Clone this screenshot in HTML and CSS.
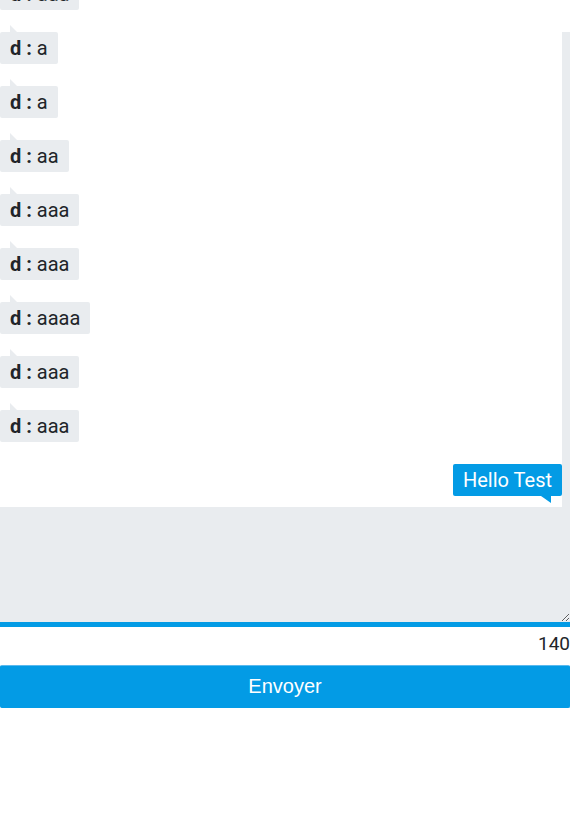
FILE: index.html
```html
<!DOCTYPE html>
<html lang="fr">
<head>
<meta charset="utf-8">
<title>Chat</title>
<link rel="stylesheet" href="styles.css">
</head>
<body>
<div class="page">
  <div class="msg msg-first"><span class="bubble them"><b>d :</b> aaa</span></div>
  <div class="messages">
    <div class="msg"><span class="bubble them"><b>d :</b> a</span></div>
    <div class="msg"><span class="bubble them"><b>d :</b> a</span></div>
    <div class="msg"><span class="bubble them"><b>d :</b> aa</span></div>
    <div class="msg"><span class="bubble them"><b>d :</b> aaa</span></div>
    <div class="msg"><span class="bubble them"><b>d :</b> aaa</span></div>
    <div class="msg"><span class="bubble them"><b>d :</b> aaaa</span></div>
    <div class="msg"><span class="bubble them"><b>d :</b> aaa</span></div>
    <div class="msg"><span class="bubble them"><b>d :</b> aaa</span></div>
    <div class="msg msg-me"><span class="bubble me">Hello Test</span></div>
  </div>
  <textarea class="input"></textarea>
  <div class="counter">140</div>
  <button class="send" type="button">Envoyer</button>
</div>
</body>
</html>
```

FILE: styles.css
```css
html, body {
  margin: 0;
  padding: 0;
  background: #ffffff;
}
body {
  font-family: Roboto, "Liberation Sans", sans-serif;
  color: #212529;
  overflow: hidden;
}
.page {
  width: 570px;
}
.msg {
  display: flex;
}
.msg-first {
  margin-top: -22px;
}
.messages {
  margin-top: 22px;
  border-right: 8px solid #e9ecef;
  display: flex;
  flex-direction: column;
  gap: 22px;
  padding-bottom: 11px;
}
.msg-me {
  justify-content: flex-end;
}
.bubble {
  position: relative;
  display: inline-block;
  height: 32px;
  line-height: 32px;
  padding: 0 10px;
  font-size: 20px;
  border-radius: 2px;
  white-space: nowrap;
}
.bubble b {
  font-weight: 700;
}
.them {
  background: #e9ecef;
  color: #212529;
}
.them::before {
  content: "";
  position: absolute;
  left: 10px;
  top: -7px;
  width: 0;
  height: 0;
  border-bottom: 7px solid #e9ecef;
  border-right: 7px solid transparent;
}
.me {
  background: #039be5;
  color: #ffffff;
}
.me::after {
  content: "";
  position: absolute;
  right: 11px;
  bottom: -7px;
  width: 0;
  height: 0;
  border-top: 7px solid #039be5;
  border-left: 10px solid transparent;
}
.input {
  display: block;
  box-sizing: border-box;
  width: 570px;
  height: 120px;
  margin: 0;
  border: none;
  border-bottom: 5px solid #039be5;
  background: #e9ecef;
  font-family: Roboto, sans-serif;
  font-size: 18px;
  outline: none;
}
.counter {
  text-align: right;
  font-size: 19px;
  line-height: 24px;
  margin-top: 5px;
  color: #212529;
}
.send {
  display: block;
  box-sizing: border-box;
  width: 570px;
  height: 43px;
  margin-top: 9px;
  background: #039be5;
  color: #ffffff;
  border: 1px solid #039be5;
  border-top-color: #5ab9ee;
  border-radius: 2px;
  font-family: "Liberation Sans", Arial, sans-serif;
  font-size: 20px;
  padding: 0;
}
```
